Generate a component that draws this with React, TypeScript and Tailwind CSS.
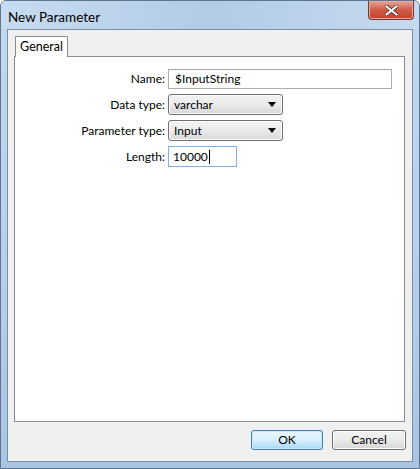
import React from "react";

const font = { fontFamily: 'Lato, "Noto Sans", Arial, sans-serif' };

const SelectBox = ({ value }: { value: string }) => (
  <div className="w-[115px] h-[21px] flex items-center justify-between rounded-[3px] border border-[#707070] bg-gradient-to-b from-[#f2f2f2] via-[#ebebeb] to-[#d8d8d8] pl-[5px] pr-[6px] text-[12px] text-black shadow-[inset_0_0_0_1px_#fcfcfc]">
    <span className="leading-none">{value}</span>
    <svg width="8" height="5" viewBox="0 0 8 5">
      <path d="M0 0h8L4 5z" fill="#000" />
    </svg>
  </div>
);

const Row = ({ label, children }: { label: string; children: React.ReactNode }) => (
  <>
    <div className="h-[21px] flex items-center justify-end text-[12px] text-black">{label}</div>
    <div className="h-[21px] flex items-center">{children}</div>
  </>
);

export default function App() {
  return (
    <div
      className="w-[420px] h-[469px] flex flex-col border border-[#5c7594] rounded-t-[6px] bg-gradient-to-b from-[#c3d8ee] via-[#b9d1ea] to-[#a9c4e2] overflow-hidden"
      style={font}
    >
      {/* title bar */}
      <div className="h-[28px] flex items-start justify-between pl-[7px] pr-[5px] bg-gradient-to-r from-[#c8dcf0] via-[#b2cbe6] to-[#c6daef]">
        <span className="mt-[6px] text-[13.5px] text-black">New Parameter</span>
        <div className="w-[46px] h-[19px] flex items-center justify-center rounded-b-[4px] border border-t-0 border-[#6b3a36] bg-gradient-to-b from-[#e4a598] via-[#cf5a45] to-[#c4402b] shadow-[inset_0_0_0_1px_#eaa99b]">
          <svg width="13" height="11" viewBox="0 0 13 11">
            <path d="M1.5 1.5l10 8M11.5 1.5l-10 8" stroke="#5a2a24" strokeWidth="3.6" strokeLinecap="square" />
            <path d="M1.5 1.5l10 8M11.5 1.5l-10 8" stroke="#ffffff" strokeWidth="2" strokeLinecap="square" />
          </svg>
        </div>
      </div>

      {/* client area */}
      <div className="flex-1 mx-[6px] mb-[6px] flex flex-col border border-[#7a8fa6] bg-[#f0f0f0] pt-[6px] pl-[6px] pr-[7px]">
        {/* tab strip */}
        <div className="flex h-[20px]">
          <div className="ml-[1px] w-[53px] h-[21px] flex items-center justify-center border border-b-0 border-[#898c95] bg-white text-[12.5px] text-black z-10">
            General
          </div>
        </div>
        {/* tab panel */}
        <div className="h-[366px] border border-[#898c95] bg-white pt-[11px]">
          <div className="grid grid-cols-[150px_auto] gap-x-[3px] gap-y-[5px]">
            <Row label="Name:">
              <div className="w-[224px] h-[20px] flex items-center border border-[#abadb3] border-t-[#a1a1a1] bg-white pl-[6px] text-[12px] text-black">
                $InputString
              </div>
            </Row>
            <Row label="Data type:">
              <SelectBox value="varchar" />
            </Row>
            <Row label="Parameter type:">
              <SelectBox value="Input" />
            </Row>
            <Row label="Length:">
              <div className="w-[69px] h-[21px] flex items-center border border-[#7eb4ea] bg-white pl-[4px] text-[12px] text-black">
                10000
                <span className="ml-[1px] w-px h-[14px] bg-black" />
              </div>
            </Row>
          </div>
        </div>
        {/* buttons */}
        <div className="flex justify-end gap-[9px] mt-[8px] mr-[-1px]">
          <button className="w-[72px] h-[20px] rounded-[3px] border border-[#3c7fb1] bg-gradient-to-b from-[#eaf6fd] via-[#d9f0fc] to-[#a7d9f5] text-[12px] text-black shadow-[inset_0_0_0_1px_#cdeafb]">
            OK
          </button>
          <button className="w-[74px] h-[20px] rounded-[3px] border border-[#707070] bg-gradient-to-b from-[#f2f2f2] via-[#ebebeb] to-[#d6d6d6] text-[12px] text-black shadow-[inset_0_0_0_1px_#fcfcfc]">
            Cancel
          </button>
        </div>
      </div>
    </div>
  );
}
